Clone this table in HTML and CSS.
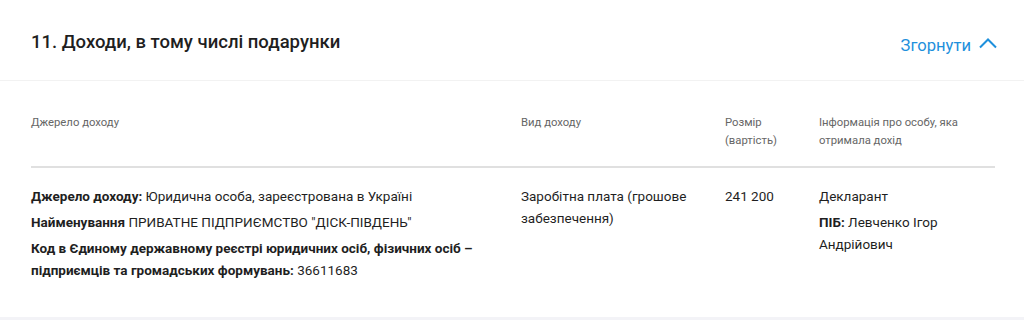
FILE: index.html
```html
<!DOCTYPE html>
<html lang="uk">
<head>
<meta charset="utf-8">
<link rel="stylesheet" href="styles.css">
</head>
<body>
<section class="card">
  <header class="card-head">
    <h2 class="title">11. Доходи, в тому числі подарунки</h2>
    <button class="toggle">Згорнути
      <svg class="chev" width="20" height="12" viewBox="0 0 20 12"><path d="M2 10.5 L10 2.5 L18 10.5" fill="none" stroke="#1e90dc" stroke-width="2"/></svg>
    </button>
  </header>
  <div class="table">
    <div class="row thead">
      <div class="cell">Джерело доходу</div>
      <div class="cell">Вид доходу</div>
      <div class="cell">Розмір (вартість)</div>
      <div class="cell">Інформація про особу, яка отримала дохід</div>
    </div>
    <div class="row tbody">
      <div class="cell">
        <p><b>Джерело доходу:</b> Юридична особа, зареєстрована в Україні</p>
        <p><b>Найменування</b> ПРИВАТНЕ ПІДПРИЄМСТВО "ДІСК-ПІВДЕНЬ"</p>
        <p><b>Код в Єдиному державному реєстрі юридичних осіб, фізичних осіб – підприємців та громадських формувань:</b> 36611683</p>
      </div>
      <div class="cell"><p>Заробітна плата (грошове забезпечення)</p></div>
      <div class="cell"><p>241 200</p></div>
      <div class="cell">
        <p>Декларант</p>
        <p><b>ПІБ:</b> Левченко Ігор Андрійович</p>
      </div>
    </div>
  </div>
</section>
</body>
</html>
```

FILE: styles.css
```css
* { box-sizing: border-box; }
html, body { margin: 0; padding: 0; }
body {
  background: #f3f3f7;
  font-family: Roboto, "Noto Sans", Arial, sans-serif;
  color: #222;
}
.card {
  background: #fff;
  height: 317px;
}
.card-head {
  height: 81px;
  border-bottom: 1px solid #f2f2f2;
  display: flex;
  align-items: center;
  justify-content: space-between;
  padding: 0 26px 0 31px;
}
.title {
  margin: 0;
  font-size: 18.5px;
  font-weight: 500;
  color: #1f1f1f;
  position: relative;
  top: 2px;
}
.toggle {
  border: 0;
  background: none;
  padding: 0;
  font-family: inherit;
  font-size: 16.6px;
  color: #1e90dc;
  display: flex;
  align-items: center;
  gap: 7px;
  position: relative;
  top: 5px;
  cursor: pointer;
}
.chev { display: block; position: relative; top: -2px; }
.table {
  margin: 0 29px 0 31px;
}
.row {
  display: grid;
  grid-template-columns: 490px 204px 94px 1fr;
}
.thead {
  padding: 33px 0 16px;
  border-bottom: 2px solid #e0e0e0;
  font-size: 11.3px;
  line-height: 18px;
  color: #666;
}
.thead .cell { padding-right: 14px; }
.tbody {
  padding-top: 17px;
  font-size: 13.5px;
  line-height: 22px;
  color: #1f1f1f;
}
.tbody .cell { padding-right: 18px; }
.tbody p { margin: 0 0 4px; }
.tbody b { font-weight: 700; }
```
